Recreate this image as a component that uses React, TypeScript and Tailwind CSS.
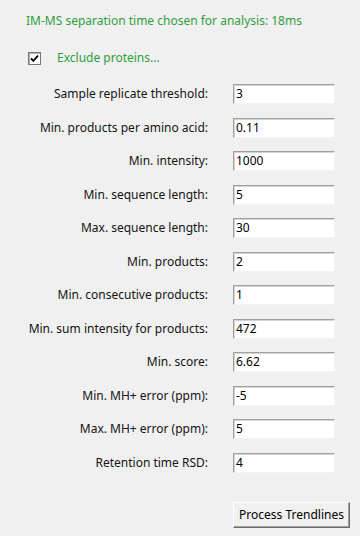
import React from 'react';

const fields = [
  { label: 'Sample replicate threshold:', value: '3' },
  { label: 'Min. products per amino acid:', value: '0.11' },
  { label: 'Min. intensity:', value: '1000' },
  { label: 'Min. sequence length:', value: '5' },
  { label: 'Max. sequence length:', value: '30' },
  { label: 'Min. products:', value: '2' },
  { label: 'Min. consecutive products:', value: '1' },
  { label: 'Min. sum intensity for products:', value: '472' },
  { label: 'Min. score:', value: '6.62' },
  { label: 'Min. MH+ error (ppm):', value: '-5' },
  { label: 'Max. MH+ error (ppm):', value: '5' },
  { label: 'Retention time RSD:', value: '4' },
];

export default function App() {
  return (
    <div className="w-[360px] h-[536px] bg-[#f0f0f0] text-[12px] text-[#141414] overflow-hidden" style={{ fontFamily: '"Noto Sans", "Open Sans", sans-serif' }}>
      <div className="pt-[12px] pl-[26px] text-[#2f9e3e] leading-[18px]">
        IM-MS separation time chosen for analysis: 18ms
      </div>

      <div className="mt-[21px] pl-[28px] flex items-center h-[14px]">
        <div className="w-[13px] h-[13px] bg-white border border-solid border-[#777777] shadow-[inset_1px_1px_0_#b0b0b0] flex items-center justify-center">
          <svg width="9" height="9" viewBox="0 0 9 9">
            <path d="M1 4.3 L3.3 6.8 L8 1.6" fill="none" stroke="#000" strokeWidth="1.9" />
          </svg>
        </div>
        <span className="ml-[16px] text-[#2f9e3e]">Exclude proteins...</span>
      </div>

      <div className="mt-[19px] flex flex-col">
        {fields.map((f) => (
          <div key={f.label} className="h-[33.55px] flex items-start">
            <div className="w-[208px] text-right pt-[1px] leading-[18px]">{f.label}</div>
            <div className="ml-[25px] w-[102px] h-[20px] bg-white border-t border-l border-t-[#a0a0a0] border-l-[#a0a0a0] border-b border-r border-b-[#f4f4f4] border-r-[#f4f4f4] shadow-[inset_1px_1px_0_#d4d4d4] pl-[2px] leading-[18px] text-black">
              {f.value}
            </div>
          </div>
        ))}
      </div>

      <div className="mt-[15px] pl-[233px]">
        <button className="w-[117px] h-[26px] bg-[#f0f0f0] border border-t-white border-l-white border-b-[#696969] border-r-[#696969] shadow-[inset_-1px_-1px_0_#a0a0a0] text-black leading-[22px]">
          Process Trendlines
        </button>
      </div>
    </div>
  );
}
